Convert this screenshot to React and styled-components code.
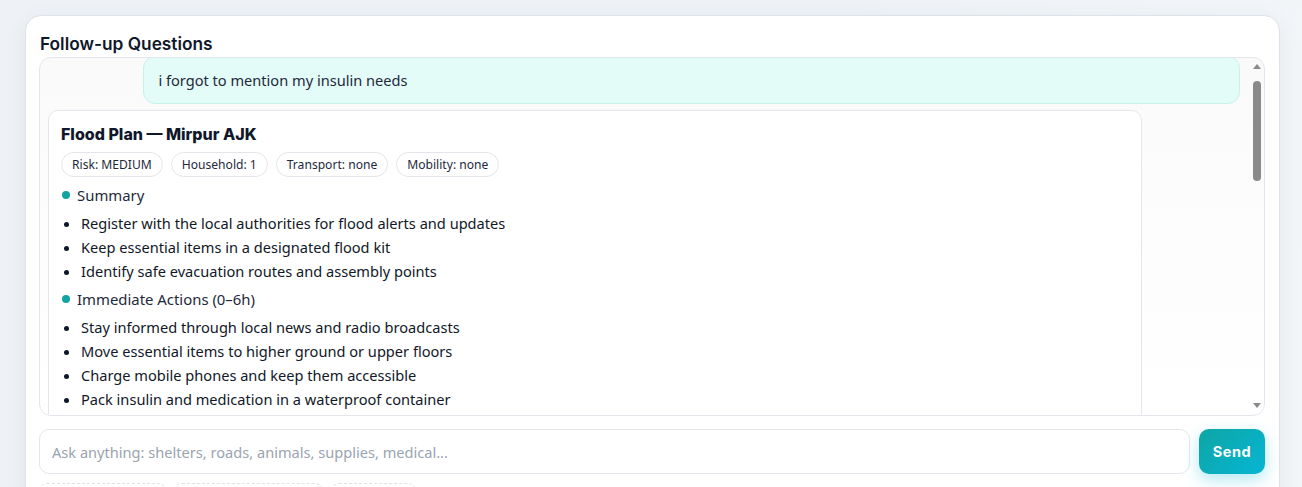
import React, { useEffect, useRef } from 'react';
import styled, { createGlobalStyle } from 'styled-components';

const GlobalStyle = createGlobalStyle`
  html, body {
    margin: 0;
    padding: 0;
    height: 100%;
    overflow: hidden;
  }
  body {
    font-family: "Noto Sans", "Open Sans", sans-serif;
    background: linear-gradient(100deg, #eef1f5 0%, #eef2f6 60%, #f3f6f9 100%);
    color: #0f172a;
  }
`;

const plan = {
  title: 'Flood Plan — Mirpur AJK',
  chips: ['Risk: MEDIUM', 'Household: 1', 'Transport: none', 'Mobility: none'],
  sections: [
    {
      name: 'Summary',
      items: [
        'Register with the local authorities for flood alerts and updates',
        'Keep essential items in a designated flood kit',
        'Identify safe evacuation routes and assembly points',
      ],
    },
    {
      name: 'Immediate Actions (0–6h)',
      items: [
        'Stay informed through local news and radio broadcasts',
        'Move essential items to higher ground or upper floors',
        'Charge mobile phones and keep them accessible',
        'Pack insulin and medication in a waterproof container',
        'Keep insulin cool using an insulated bag or cool packs',
      ],
    },
    {
      name: 'Next 24 Hours',
      items: [
        'Follow evacuation orders from local authorities immediately',
        'Avoid walking or driving through flood waters',
        'Check on neighbours who may need assistance',
        'Keep a written list of medications and doses with you',
      ],
    },
    {
      name: 'Shelter & Supplies',
      items: [
        'Nearest shelters: government schools and community halls',
        'Drinking water for at least 3 days',
        'Non-perishable food, torch, spare batteries',
        'Extra insulin, syringes and glucose tablets',
      ],
    },
    {
      name: 'Medical',
      items: [
        'Monitor blood sugar more often during stress and disruption',
        'Inform shelter staff that you are insulin dependent',
        'Emergency contact: 1122 Rescue',
      ],
    },
  ],
};

const quick = ['Nearest shelter?', 'Is my road flooded?', 'Supplies?'];

export default function App() {
  const scrollRef = useRef(null);
  const bubbleRef = useRef(null);

  useEffect(() => {
    if (scrollRef.current && bubbleRef.current) {
      scrollRef.current.scrollTop = bubbleRef.current.offsetTop + 2;
    }
  }, []);

  return (
    <>
      <GlobalStyle />
      <Page>
        <Panel>
          <Heading>Follow-up Questions</Heading>
          <ChatBox>
            <ScrollArea ref={scrollRef}>
              <DayLabel>Today</DayLabel>
              <UserBubble ref={bubbleRef}>i forgot to mention my insulin needs</UserBubble>
              <PlanCard>
                <PlanTitle>{plan.title}</PlanTitle>
                <ChipRow>
                  {plan.chips.map((c) => (
                    <Chip key={c}>{c}</Chip>
                  ))}
                </ChipRow>
                {plan.sections.map((s) => (
                  <Section key={s.name}>
                    <SectionHead>
                      <Dot />
                      {s.name}
                    </SectionHead>
                    <List>
                      {s.items.map((it) => (
                        <Item key={it}>{it}</Item>
                      ))}
                    </List>
                  </Section>
                ))}
              </PlanCard>
            </ScrollArea>
            <Rail>
              <Arrow $dir="up" />
              <Thumb />
              <RailSpace />
              <Arrow $dir="down" />
            </Rail>
          </ChatBox>
          <InputRow>
            <AskInput placeholder="Ask anything: shelters, roads, animals, supplies, medical..." />
            <SendButton>Send</SendButton>
          </InputRow>
          <QuickRow>
            {quick.map((q) => (
              <QuickChip key={q}>{q}</QuickChip>
            ))}
          </QuickRow>
        </Panel>
      </Page>
    </>
  );
}

const Page = styled.div`
  padding: 15px 22px 0 25px;
`;

const Panel = styled.div`
  background: #ffffff;
  border: 1px solid #dde3ea;
  border-radius: 16px;
  box-shadow: 0 6px 24px rgba(15, 23, 42, 0.06);
  padding: 16px 14px 20px 13px;
`;

const Heading = styled.div`
  font-family: Inter, "Noto Sans", sans-serif;
  font-size: 17.3px;
  font-weight: 600;
  color: #0f172a;
  line-height: 24px;
  margin-bottom: 1px;
  padding-left: 1px;
`;

const ChatBox = styled.div`
  box-sizing: border-box;
  height: 359px;
  display: flex;
  border: 1px solid #e3e7ec;
  border-radius: 12px;
  overflow: hidden;
  background: linear-gradient(180deg, #fafafa 0%, #ffffff 100%);
`;

const ScrollArea = styled.div`
  position: relative;
  flex: 1;
  overflow-y: scroll;
  scrollbar-width: none;
  padding: 8px 9px 8px 8px;
  display: flex;
  flex-direction: column;
  gap: 6px;
`;

const Rail = styled.div`
  width: 15px;
  flex-shrink: 0;
  display: flex;
  flex-direction: column;
  align-items: center;
  padding: 6px 0 7px;
  box-sizing: border-box;
`;

const Arrow = styled.span`
  width: 0;
  height: 0;
  border-left: 4px solid transparent;
  border-right: 4px solid transparent;
  ${(p) =>
    p.$dir === 'up'
      ? 'border-bottom: 5px solid #8a8a8a;'
      : 'border-top: 5px solid #8a8a8a;'}
`;

const Thumb = styled.span`
  width: 8px;
  height: 100px;
  margin-top: 12px;
  border-radius: 4px;
  background: #8a8a8a;
`;

const RailSpace = styled.span`
  flex: 1;
`;

const DayLabel = styled.div`
  height: 20px;
  font-size: 11px;
  line-height: 20px;
  color: #94a3b8;
  text-align: center;
`;

const UserBubble = styled.div`
  align-self: flex-end;
  width: 92%;
  box-sizing: border-box;
  background: #e4fcf8;
  border: 1px solid #c8f1ea;
  border-radius: 12px;
  padding: 12px 14px;
  font-size: 14.6px;
  line-height: 22px;
  color: #1e293b;
`;

const PlanCard = styled.div`
  width: 91.8%;
  box-sizing: border-box;
  background: #ffffff;
  border: 1px solid #e3e6ea;
  border-radius: 10px;
  padding: 12px 12px 12px;
  flex-shrink: 0;
`;

const PlanTitle = styled.div`
  font-family: Inter, "Noto Sans", sans-serif;
  font-size: 16px;
  font-weight: 800;
  line-height: 22px;
  color: #0f172a;
`;

const ChipRow = styled.div`
  display: flex;
  gap: 8px;
  margin-top: 7px;
  margin-bottom: 6px;
`;

const Chip = styled.span`
  display: inline-flex;
  align-items: center;
  height: 25px;
  box-sizing: border-box;
  padding: 0 10px;
  border: 1px solid #e3e6ea;
  border-radius: 999px;
  font-size: 12.1px;
  color: #1e293b;
  background: #ffffff;
`;

const Section = styled.div`
  margin-top: 4px;
`;

const SectionHead = styled.div`
  display: flex;
  align-items: center;
  gap: 7px;
  font-size: 14.9px;
  line-height: 24px;
  color: #1e293b;
`;

const Dot = styled.span`
  width: 8px;
  height: 8px;
  border-radius: 50%;
  background: #14a3a3;
  margin-left: 1px;
`;

const List = styled.ul`
  margin: 4px 0 0;
  padding-left: 20px;
`;

const Item = styled.li`
  font-size: 14.6px;
  line-height: 24px;
  color: #111827;
  &::marker {
    color: #0f172a;
  }
`;

const InputRow = styled.div`
  display: flex;
  gap: 9px;
  margin-top: 13px;
`;

const AskInput = styled.input`
  flex: 1;
  height: 45px;
  box-sizing: border-box;
  border: 1px solid #e3e7ec;
  border-radius: 10px;
  padding: 0 12px;
  font-family: "Noto Sans", sans-serif;
  font-size: 14.6px;
  color: #0f172a;
  background: #ffffff;
  outline: none;
  &::placeholder {
    color: #9aa4b0;
  }
`;

const SendButton = styled.button`
  width: 66px;
  height: 45px;
  border: none;
  border-radius: 10px;
  background: linear-gradient(135deg, #0ea5a4 0%, #06b6d4 100%);
  box-shadow: 0 6px 16px rgba(6, 182, 212, 0.3);
  color: #ffffff;
  font-family: Inter, "Noto Sans", sans-serif;
  font-size: 14.5px;
  font-weight: 700;
  letter-spacing: 0.6px;
  cursor: pointer;
`;

const QuickRow = styled.div`
  display: flex;
  gap: 8px;
  margin-top: 9px;
`;

const QuickChip = styled.span`
  height: 28px;
  box-sizing: border-box;
  padding: 5px 13px;
  border: 1px dashed #dfe3e8;
  border-radius: 8px;
  font-size: 13px;
  white-space: nowrap;
  color: #334155;
`;
